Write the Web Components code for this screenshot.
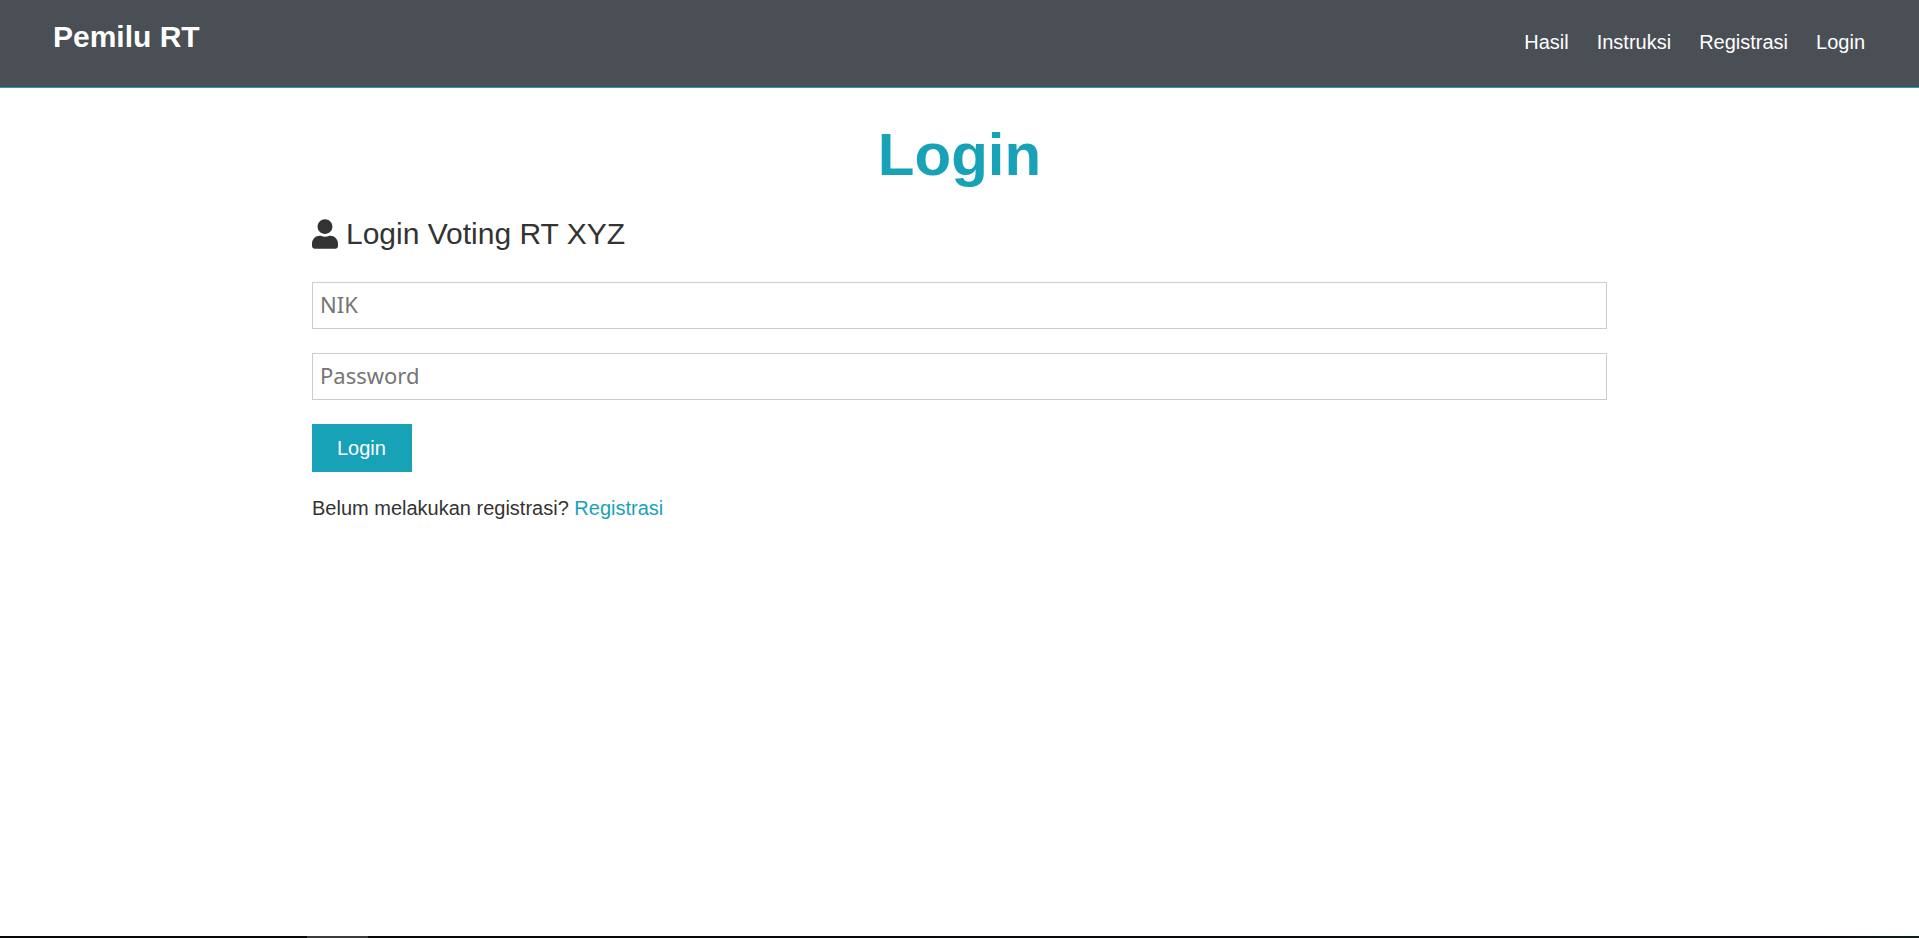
<!DOCTYPE html>
<html lang="id">
<head>
<meta charset="utf-8">
<title>Pemilu RT - Login</title>
<style>
body { margin: 0; background: #fff; color: #333; font: 20px/32px "Liberation Sans", Arial, sans-serif; --primary: #17a2b8; }
</style>
</head>
<body>
<login-page></login-page>

<template id="nav-bar">
<style>
:host { display: block; }
nav { display: flex; justify-content: space-between; align-items: flex-start; padding: 13px 54px 26px 53px; background: #4a4e55; border-bottom: 1px solid var(--primary); }
h1 { margin: 0; font-size: 30px; line-height: 48px; color: #fff; }
a { color: #fff; text-decoration: none; }
ul { display: flex; gap: 28px; list-style: none; margin: 0; padding: 13px 0 0; }
</style>
<nav>
<h1><a href="#">Pemilu RT</a></h1>
<ul>
<li><a href="#hasil">Hasil</a></li>
<li><a href="#instruksi">Instruksi</a></li>
<li><a href="#registrasi">Registrasi</a></li>
<li><a href="#login">Login</a></li>
</ul>
</nav>
</template>

<template id="user-icon">
<style>
:host { display: inline-block; }
svg { display: block; width: 26px; height: 30px; fill: currentColor; }
</style>
<svg viewBox="0 0 448 512" aria-hidden="true"><path d="M224 256c70.700 0 128-57.300 128-128S294.700 0 224 0 96 57.300 96 128s57.300 128 128 128zm89.600 32h-16.700c-22.200 10.200-46.900 16-72.900 16s-50.600-5.800-72.900-16h-16.700C60.200 288 0 348.200 0 422.400V464c0 26.500 21.500 48 48 48h352c26.500 0 48-21.500 48-48v-41.600c0-74.200-60.200-134.400-134.400-134.400z"/></svg>
</template>

<template id="form-field">
<style>
:host { display: block; }
input { display: block; box-sizing: border-box; width: 100%; padding: 6px 7px 9px; border: 1px solid #ccc; border-radius: 0; background: #fff; color: #333; font: 22px/30px "Noto Sans", Tahoma, sans-serif; }
input::placeholder { color: #757575; }
</style>
<input>
</template>

<template id="login-form">
<style>
:host { display: block; }
form { display: grid; gap: 24px; justify-items: start; }
form-field { width: 100%; }
button { border: 0; padding: 8px 26px 8px 25px; background: var(--primary); color: #fff; font: inherit; cursor: pointer; }
</style>
<form>
<form-field name="nik" label="NIK" type="text"></form-field>
<form-field name="password" label="Password" type="password"></form-field>
<button type="button">Login</button>
</form>
</template>

<template id="login-page">
<style>
:host { display: flex; flex-direction: column; min-height: 100vh; }
main { flex: 1; box-sizing: border-box; width: 100%; max-width: 1375px; margin: 0 auto; padding: 31px 40px; }
h2 { margin: 0 0 17px; font-size: 60px; line-height: 72px; text-align: center; color: var(--primary); }
.lead { display: flex; align-items: center; gap: 8px; margin: 0 0 22px; font-size: 30px; line-height: 52px; }
.hint { margin: 20px 0 0; }
a { color: var(--primary); text-decoration: none; }
.edge { height: 2px; background: linear-gradient(to right, #08080a 307px, #3b3b3d 307px 368px, #08080a 368px, #080810 95%, #0b2119); }
</style>
<nav-bar></nav-bar>
<main>
<h2>Login</h2>
<p class="lead"><user-icon></user-icon><span>Login Voting RT XYZ</span></p>
<login-form></login-form>
<p class="hint">Belum melakukan registrasi? <a href="#registrasi">Registrasi</a></p>
</main>
<div class="edge"></div>
</template>

<script>
class TemplateElement extends HTMLElement {
  constructor() {
    super();
    this.attachShadow({ mode: "open" }).append(
      document.getElementById(this.localName).content.cloneNode(true));
  }
}
customElements.define("nav-bar", class extends TemplateElement {});
customElements.define("user-icon", class extends TemplateElement {});
customElements.define("form-field", class extends TemplateElement {
  connectedCallback() {
    const input = this.shadowRoot.querySelector("input");
    const text = this.getAttribute("label");
    input.setAttribute("aria-label", text);
    input.placeholder = text;
    input.type = this.getAttribute("type");
    input.name = this.getAttribute("name");
  }
});
customElements.define("login-form", class extends TemplateElement {});
customElements.define("login-page", class extends TemplateElement {});
</script>
</body>
</html>
